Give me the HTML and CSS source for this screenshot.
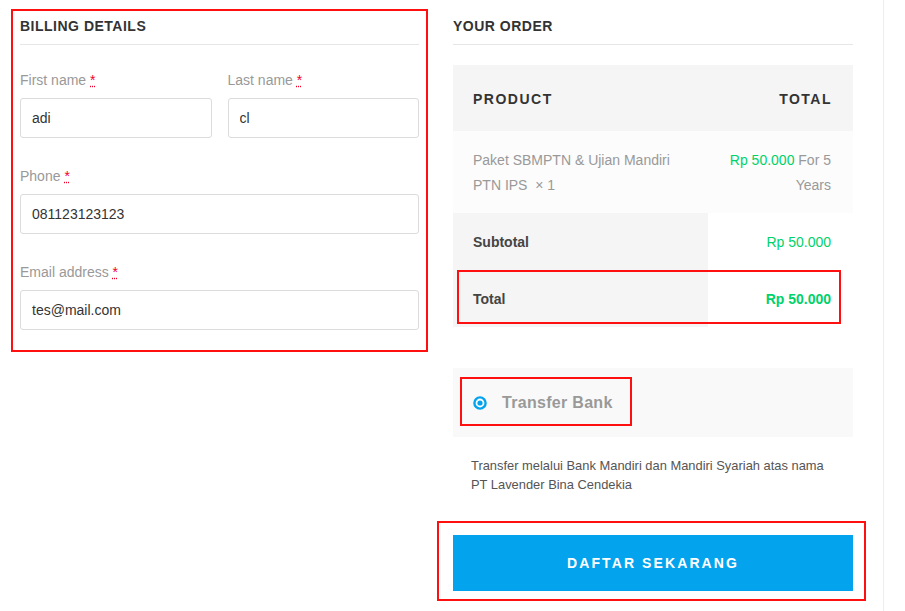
FILE: index.html
```html
<!DOCTYPE html>
<html lang="id">
<head>
<meta charset="utf-8">
<title>Checkout</title>
<link rel="stylesheet" href="styles.css">
</head>
<body>
<div class="frame">
  <section class="billing">
    <h3 class="section-title">BILLING DETAILS</h3>
    <div class="form-row two">
      <div class="field">
        <label class="field-label">First name <abbr class="req" title="required">*</abbr></label>
        <input class="field-input" type="text" value="adi">
      </div>
      <div class="field">
        <label class="field-label">Last name <abbr class="req" title="required">*</abbr></label>
        <input class="field-input" type="text" value="cl">
      </div>
    </div>
    <div class="form-row">
      <div class="field">
        <label class="field-label">Phone <abbr class="req" title="required">*</abbr></label>
        <input class="field-input" type="text" value="081123123123">
      </div>
    </div>
    <div class="form-row">
      <div class="field">
        <label class="field-label">Email address <abbr class="req" title="required">*</abbr></label>
        <input class="field-input" type="text" value="tes@mail.com">
      </div>
    </div>
  </section>

  <section class="order">
    <h3 class="section-title">YOUR ORDER</h3>
    <div class="table-wrap">
      <table class="order-table">
        <thead>
          <tr class="head-row">
            <th class="col-name">PRODUCT</th>
            <th class="col-total">TOTAL</th>
          </tr>
        </thead>
        <tbody>
          <tr class="item-row">
            <td class="col-name">Paket SBMPTN &amp; Ujian Mandiri PTN IPS&nbsp; ×&nbsp;1</td>
            <td class="col-total"><span class="price">Rp 50.000</span> For 5 Years</td>
          </tr>
        </tbody>
        <tfoot>
          <tr class="sum-row">
            <th class="sum-label">Subtotal</th>
            <td class="col-total"><span class="price">Rp 50.000</span></td>
          </tr>
          <tr class="sum-row">
            <th class="sum-label">Total</th>
            <td class="col-total"><strong class="price">Rp 50.000</strong></td>
          </tr>
        </tfoot>
      </table>
      <span class="mark mark-total"></span>
    </div>

    <div class="payment">
      <label class="method">
        <svg class="radio" width="14" height="14" viewBox="0 0 14 14"><circle cx="7" cy="7" r="5.6" fill="#fff" stroke="#03a4ed" stroke-width="2.4"/><circle cx="7" cy="7" r="2.6" fill="#03a4ed"/></svg>
        <span class="method-name">Transfer Bank</span>
      </label>
    </div>
    <p class="pay-desc">Transfer melalui Bank Mandiri dan Mandiri Syariah atas nama PT Lavender Bina Cendekia</p>

    <div class="place-order">
      <button class="btn-order" type="button">DAFTAR SEKARANG</button>
      <span class="mark mark-button"></span>
    </div>
  </section>
</div>
</body>
</html>
```
FILE: styles.css
```css
* { box-sizing: border-box; }

html, body {
  margin: 0;
  padding: 0;
  background: #fff;
  font-family: "Liberation Sans", Arial, sans-serif;
  color: #333;
}

.frame {
  width: 884px;
  min-height: 611px;
  border-right: 1px solid #eeeeee;
  display: flex;
  align-items: flex-start;
  padding: 9px 0 0 11px;
}

/* Billing */
.billing {
  width: 417px;
  border: 2px solid #ff1010;
  padding: 5px 7px 20px;
}

.section-title {
  margin: 0;
  font-size: 14px;
  font-weight: bold;
  line-height: 20px;
  letter-spacing: 0.5px;
  color: #333;
  padding-bottom: 8px;
  border-bottom: 1px solid #e6e6e6;
}

.form-row {
  display: flex;
  gap: 16px;
  margin-top: 28px;
}
.form-row.two { margin-top: 25px; }

.field { flex: 1; display: flex; flex-direction: column; }

.field-label {
  font-size: 14px;
  line-height: 20px;
  color: #999;
  margin-bottom: 8px;
}

.req {
  color: #f0002a;
  text-decoration: underline dotted;
  border: 0;
}

.field-input {
  height: 40px;
  width: 100%;
  border: 1px solid #dcdcdc;
  border-radius: 3px;
  padding: 0 11px;
  font-family: "Liberation Sans", Arial, sans-serif;
  font-size: 14px;
  color: #333;
  background: #fff;
  outline: none;
}

/* Order */
.order {
  width: 400px;
  margin-left: 25px;
  padding-top: 7px;
}

.table-wrap {
  position: relative;
  margin-top: 20px;
}

.order-table {
  width: 400px;
  border-collapse: collapse;
  font-size: 14px;
}

.order-table th,
.order-table td {
  padding: 0 20px;
  text-align: left;
  vertical-align: middle;
}

.order-table .col-total {
  text-align: right;
  padding-right: 22px;
}

.head-row { background: #f5f5f5; }
.head-row th {
  height: 66px;
  padding-top: 2px;
  font-size: 14px;
  font-weight: bold;
  letter-spacing: 1.5px;
  color: #333;
}
.head-row .col-total { padding-right: 21px; }

.item-row { background: #fcfcfc; }
.item-row td {
  padding-top: 17px;
  padding-bottom: 15px;
  line-height: 25px;
  color: #999;
}
.item-row .col-name { width: 255px; }

.price { color: #00d26a; }

.sum-row th,
.sum-row td { height: 57px; }
.sum-label {
  background: #f5f5f5;
  font-weight: bold;
  color: #444;
}

.mark {
  position: absolute;
  border: 2px solid #ff1010;
  pointer-events: none;
}
.mark-total {
  left: 4px;
  top: 205px;
  width: 384px;
  height: 54px;
}

/* Payment */
.payment {
  margin-top: 41px;
  background: #f9f9f9;
  padding: 9px 7px 11px;
}

.method {
  display: inline-flex;
  align-items: center;
  height: 49px;
  border: 2px solid #ff1010;
  padding: 2px 17px 0 11px;
  gap: 15px;
}

.radio { display: block; }

.method-name {
  font-size: 16px;
  font-weight: bold;
  letter-spacing: 0.3px;
  color: #999;
}

.pay-desc {
  margin: 0;
  padding: 19px 18px 0;
  font-size: 12.9px;
  line-height: 19px;
  color: #555;
}

.place-order {
  position: relative;
  margin-top: 41px;
}

.btn-order {
  display: block;
  width: 400px;
  height: 56px;
  border: 0;
  background: #03a4ed;
  color: #fff;
  font-family: "Liberation Sans", Arial, sans-serif;
  font-size: 14px;
  font-weight: bold;
  letter-spacing: 2.1px;
}

.mark-button {
  left: -16px;
  top: -14px;
  width: 429px;
  height: 80px;
}
```
